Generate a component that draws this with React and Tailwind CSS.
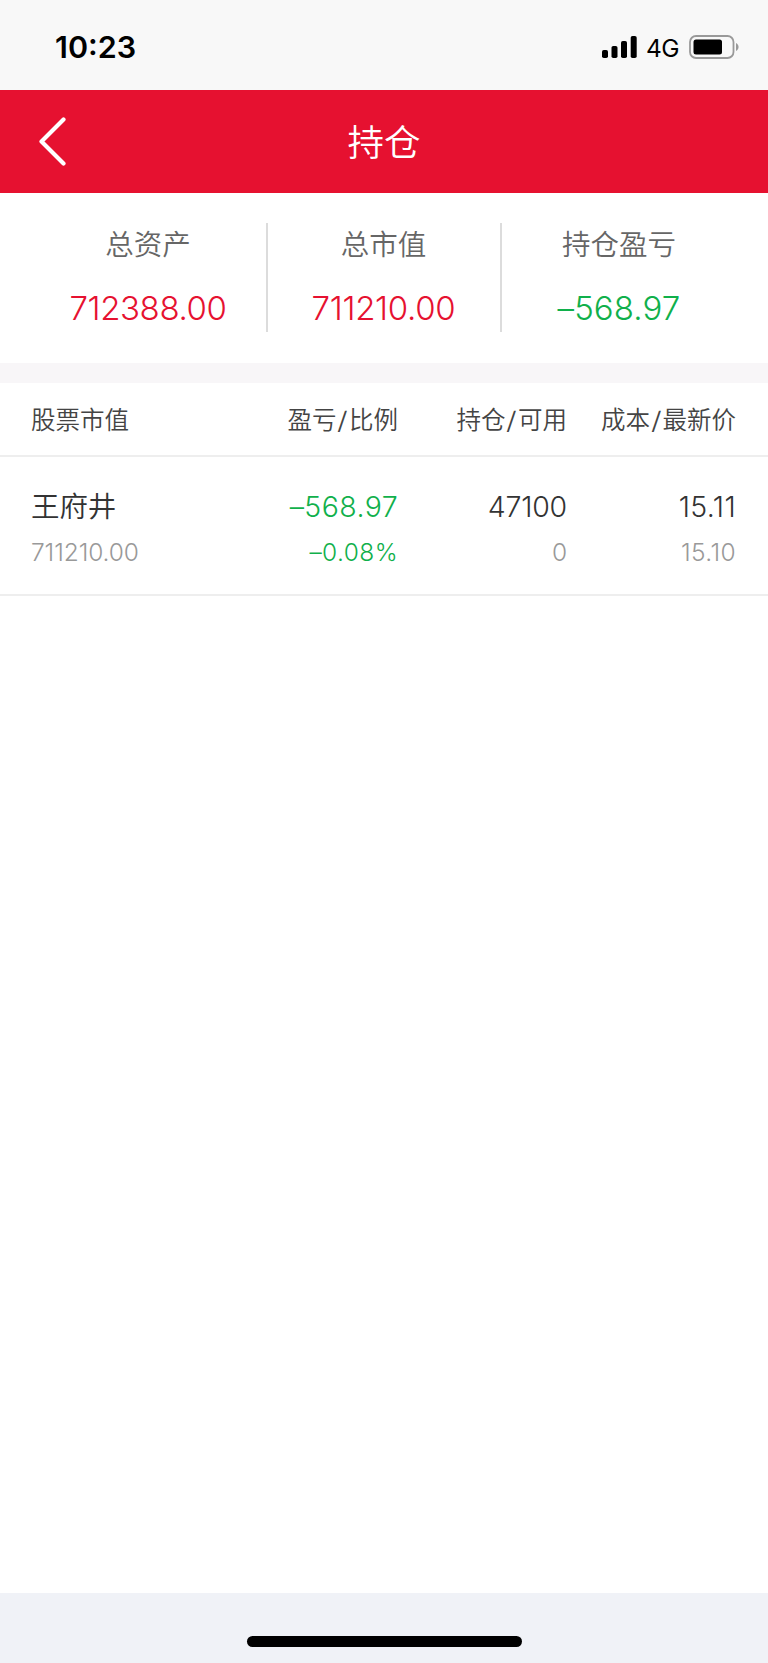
const summary = [
  { label: '总资产', value: '712388.00', color: 'text-[#e61130]', spacing: 'tracking-[-0.4px]', width: 'w-[268px] pl-[30px]' },
  { label: '总市值', value: '711210.00', color: 'text-[#e61130]', spacing: 'tracking-[-0.3px]', width: 'w-[234px] pr-[1px]' },
  { label: '持仓盈亏', value: '–568.97', color: 'text-[#10b04b]', spacing: 'tracking-[0.1px]', width: 'w-[266px] pr-[32px]' },
];

const columns = [
  { title: ['股票市值'], width: 'w-[180px]', align: 'text-left', spacing: 'tracking-[-0.1px]' },
  { title: ['盈亏', '比例'], width: 'w-[187px]', align: 'text-right', spacing: 'tracking-[0.4px]' },
  { title: ['持仓', '可用'], width: 'w-[169px]', align: 'text-right', spacing: 'tracking-[-0.2px]' },
  { title: ['成本', '最新价'], width: 'w-[169px]', align: 'text-right', spacing: 'tracking-[0.4px] -mr-[1px]' },
];

const holdings = [
  { name: '王府井', marketValue: '711210.00', profit: '–568.97', ratio: '–0.08%', amount: '47100', available: '0', cost: '15.11', price: '15.10' },
];

function StatusBar() {
  return (
    <div className="h-[90px] bg-[#f8f8f8] flex items-center justify-between pl-[55px] pr-[28px] pt-[4px] text-black">
      <span className="text-[30.5px] leading-[36px] font-semibold">10:23</span>
      <div className="flex items-center">
        <svg className="w-[36px] h-[24px]" viewBox="0 0 36 24">
          <rect x="0" y="15" width="6" height="8" rx="1.8" />
          <rect x="9.5" y="11" width="6" height="12" rx="1.8" />
          <rect x="19" y="6" width="6" height="17" rx="1.8" />
          <rect x="28.700" y="1" width="6" height="22" rx="1.8" />
        </svg>
        <span className="ml-[8px] pt-[2px] text-[24.5px] leading-[30px] tracking-[-0.5px]">4G</span>
        <svg className="ml-[10px] w-[51px] h-[24px]" viewBox="0 0 51 24">
          <rect x="1" y="1" width="43.5" height="22" rx="6" fill="none" stroke="#999" strokeWidth="1.8" />
          <rect x="4.5" y="4.5" width="28.5" height="15" rx="2.5" />
          <path d="M47 8c3.4 1.5 3.4 6.5 0 8z" fill="#999" />
        </svg>
      </div>
    </div>
  );
}

function Header() {
  return (
    <header className="h-[102.5px] bg-[#e61130] grid grid-cols-3 items-center text-white">
      <button className="pl-[38px]">
        <svg className="w-[30px] h-[50px]" viewBox="0 0 30 50" fill="none" stroke="currentColor" strokeWidth="4.2" strokeLinecap="round" strokeLinejoin="round">
          <path d="M25.5 3.500L3.500 25.500L25.5 47.500" />
        </svg>
      </button>
      <h1 className="pt-[3px] text-center text-[36.5px] leading-[50px] font-[350]">持仓</h1>
    </header>
  );
}

function Summary() {
  return (
    <section className="h-[170.5px] pt-[30.5px] flex font-[350]">
      {summary.map((item, i) => (
        <div
          key={item.label}
          className={`${item.width} h-[109px] flex flex-col items-center ${i < 2 ? 'border-r-2 border-[#dcdcdc]' : ''}`}
        >
          <span className="mt-[2px] text-[28.5px] leading-[40px] text-[#666]">{item.label}</span>
          <span className={`mt-[23px] text-[33px] leading-[40px] ${item.color} ${item.spacing}`}>{item.value}</span>
        </div>
      ))}
    </section>
  );
}

function Cell({ column, top, bottom, topColor, bottomColor }) {
  return (
    <div className={`${column.width} ${column.align} ${column.spacing} flex flex-col`}>
      <span className={`text-[28.5px] leading-[39px] ${topColor}`}>{top}</span>
      <span className={`mt-[8px] text-[24.5px] leading-[36px] ${bottomColor}`}>{bottom}</span>
    </div>
  );
}

function HoldingTable() {
  return (
    <section className="font-[350]">
      <div className="h-[74px] px-[31px] pt-[2px] flex items-center border-b-2 border-[#eee] text-[24.5px] leading-[36px] text-[#444]">
        {columns.map((column) => (
          <div key={column.title[0]} className={`${column.width} ${column.align} whitespace-nowrap`}>
            {column.title[0]}
            {column.title[1] && <span className="inline-block px-[2px] scale-x-125">/</span>}
            {column.title[1]}
          </div>
        ))}
      </div>
      {holdings.map((h) => (
        <div key={h.name} className="h-[139px] px-[31px] pt-[30px] flex border-b-2 border-[#eee]">
          <Cell column={columns[0]} top={h.name} bottom={h.marketValue} topColor="text-[#333]" bottomColor="text-[#999]" />
          <Cell column={columns[1]} top={h.profit} bottom={h.ratio} topColor="text-[#10b04b]" bottomColor="text-[#10b04b]" />
          <Cell column={columns[2]} top={h.amount} bottom={h.available} topColor="text-[#333]" bottomColor="text-[#999]" />
          <Cell column={columns[3]} top={h.cost} bottom={h.price} topColor="text-[#333]" bottomColor="text-[#999]" />
        </div>
      ))}
    </section>
  );
}

export default function App() {
  return (
    <div className="w-[768px] h-[1663px] overflow-hidden bg-white flex flex-col font-['Inter','Noto_Sans_CJK_SC',sans-serif]">
      <StatusBar />
      {/* contextual alternates would lift the dash in front of the digits */}
      <div className="flex flex-col [font-feature-settings:'calt'_0]">
        <Header />
        <Summary />
        <div className="h-[20px] bg-[#f8f6f8]" />
        <HoldingTable />
      </div>
      <footer className="mt-auto h-[70px] bg-[#f0f2f7] flex justify-center items-end pb-[16px]">
        <div className="w-[275px] h-[11px] rounded-full bg-black" />
      </footer>
    </div>
  );
}
